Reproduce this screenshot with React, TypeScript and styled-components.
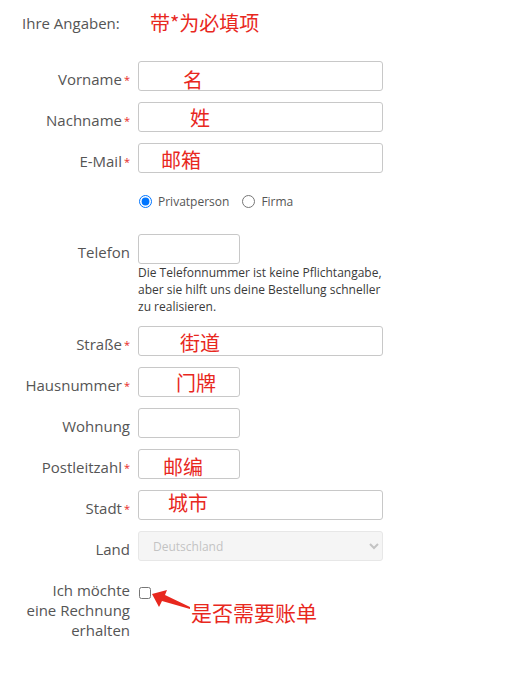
import React from "react";
import styled, { createGlobalStyle } from "styled-components";

const GlobalStyle = createGlobalStyle`
  body {
    margin: 0;
    background: #fff;
    font-family: "Open Sans", "Noto Sans", sans-serif;
  }
`;

type Field = {
  label: string;
  required?: boolean;
  size: "full" | "small";
  note?: string;
  noteX?: number;
  noteY?: number;
  help?: string[];
};

const fieldsTop: Field[] = [
  { label: "Vorname", required: true, size: "full", note: "名", noteX: 45, noteY: 9 },
  { label: "Nachname", required: true, size: "full", note: "姓", noteX: 52, noteY: 6 },
  { label: "E-Mail", required: true, size: "full", note: "邮箱", noteX: 23, noteY: 7 },
];

const fieldsBottom: Field[] = [
  {
    label: "Telefon",
    size: "small",
    help: [
      "Die Telefonnummer ist keine Pflichtangabe,",
      "aber sie hilft uns deine Bestellung schneller",
      "zu realisieren.",
    ],
  },
  { label: "Straße", required: true, size: "full", note: "街道", noteX: 42, noteY: 7 },
  { label: "Hausnummer", required: true, size: "small", note: "门牌", noteX: 38, noteY: 6 },
  { label: "Wohnung", size: "small" },
  { label: "Postleitzahl", required: true, size: "small", note: "邮编", noteX: 25, noteY: 8 },
  { label: "Stadt", required: true, size: "full", note: "城市", noteX: 30, noteY: 3 },
];

const App = () => {
  const renderField = (f: Field) => (
    <Row key={f.label}>
      <Label>
        {f.label}
        {f.required && <Star>*</Star>}
      </Label>
      <Control>
        <InputWrap>
          <TextInput size={1} $size={f.size} />
          {f.note && (
            <Note $x={f.noteX || 0} $y={f.noteY || 0}>
              {f.note}
            </Note>
          )}
        </InputWrap>
        {f.help && (
          <Help>
            {f.help.map((l) => (
              <div key={l}>{l}</div>
            ))}
          </Help>
        )}
      </Control>
    </Row>
  );

  return (
    <Page>
      <GlobalStyle />
      <Header>
        <HeaderLabel>Ihre Angaben:</HeaderLabel>
        <HeaderNote>带*为必填项</HeaderNote>
      </Header>

      <Form>
        {fieldsTop.map(renderField)}

        <Row>
          <span />
          <RadioRow>
            <RadioItem>
              <input type="radio" name="typ" defaultChecked />
              Privatperson
            </RadioItem>
            <RadioItem>
              <input type="radio" name="typ" />
              Firma
            </RadioItem>
          </RadioRow>
        </Row>

        {fieldsBottom.map(renderField)}

        <Row>
          <Label>Land</Label>
          <Control>
            <SelectBox disabled defaultValue="de">
              <option value="de">Deutschland</option>
            </SelectBox>
          </Control>
        </Row>

        <Row>
          <Label $multi>
            Ich möchte
            <br />
            eine Rechnung
            <br />
            erhalten
          </Label>
          <CheckArea>
            <CheckBox type="checkbox" />
            {/* red annotation arrow pointing at the checkbox */}
            <Arrow width="44" height="24" viewBox="0 0 44 24">
              <polygon
                points="2,6 17,2 15,7 40,19 40,21 12,13 9,19"
                fill="#e8281e"
              />
            </Arrow>
            <BillNote>是否需要账单</BillNote>
          </CheckArea>
        </Row>
      </Form>
    </Page>
  );
};

const Page = styled.div`
  width: 506px;
  height: 686px;
  position: relative;
  color: #555;
`;

const Header = styled.div`
  display: flex;
  align-items: center;
  padding: 10px 0 0 22px;
  height: 26px;
`;

const HeaderLabel = styled.div`
  font-size: 15px;
  color: #555;
  width: 128px;
`;

const HeaderNote = styled.div`
  font-family: "Noto Sans CJK SC", sans-serif;
  font-size: 20px;
  color: #e8281e;
  line-height: 26px;
`;

const Form = styled.div`
  display: flex;
  flex-direction: column;
  gap: 11px;
  margin-top: 25px;
`;

const Row = styled.div`
  display: grid;
  grid-template-columns: 130px 1fr;
  column-gap: 8px;
  align-items: start;
`;

const Label = styled.div<{ $multi?: boolean }>`
  text-align: right;
  font-size: 15px;
  line-height: 20px;
  color: #555;
  padding-top: 8px;
  white-space: nowrap;
`;

const Star = styled.span`
  color: #e8281e;
  font-size: 11px;
  margin-left: 2px;
  vertical-align: 1px;
`;

const Control = styled.div`
  display: flex;
  flex-direction: column;
`;

const InputWrap = styled.div`
  position: relative;
  width: fit-content;
`;

const TextInput = styled.input<{ $size: "full" | "small" }>`
  box-sizing: border-box;
  width: ${(p) => (p.$size === "full" ? "245px" : "102px")};
  height: 30px;
  border: 1px solid #c8c8c8;
  border-radius: 3px;
  background: #fff;
  padding: 0 8px;
  margin: 0;
  display: block;
  font-family: inherit;
`;

const Note = styled.span<{ $x: number; $y: number }>`
  position: absolute;
  left: ${(p) => p.$x}px;
  top: ${(p) => p.$y}px;
  font-family: "Noto Sans CJK SC", sans-serif;
  font-size: 20px;
  line-height: 20px;
  color: #e8281e;
  pointer-events: none;
  white-space: nowrap;
`;

const Help = styled.div`
  font-size: 12px;
  line-height: 17px;
  color: #3a3a3a;
`;

const RadioRow = styled.div`
  display: flex;
  align-items: center;
  gap: 12px;
  height: 22px;
  padding: 6px 0 11px;
`;

const RadioItem = styled.label`
  display: flex;
  align-items: center;
  font-size: 12px;
  color: #555;
  gap: 6px;

  input {
    margin: 0 0 0 1px;
    width: 13px;
    height: 13px;
  }
`;

const SelectBox = styled.select`
  box-sizing: border-box;
  width: 245px;
  height: 30px;
  border: 1px solid #ddd;
  border-radius: 3px;
  background: #f2f2f2;
  color: #aaa;
  font-family: inherit;
  font-size: 12px;
  padding: 0 10px;
  margin: 0;
`;

const CheckArea = styled.div`
  position: relative;
  height: 66px;
`;

const CheckBox = styled.input`
  margin: 15px 0 0 1px;
  width: 12px;
  height: 12px;
  display: block;
`;

const Arrow = styled.svg`
  position: absolute;
  left: 12px;
  top: 16px;
`;

const BillNote = styled.span`
  position: absolute;
  left: 53px;
  top: 29px;
  font-family: "Noto Sans CJK SC", sans-serif;
  font-size: 21px;
  line-height: 22px;
  color: #e8281e;
  white-space: nowrap;
`;

export default App;
